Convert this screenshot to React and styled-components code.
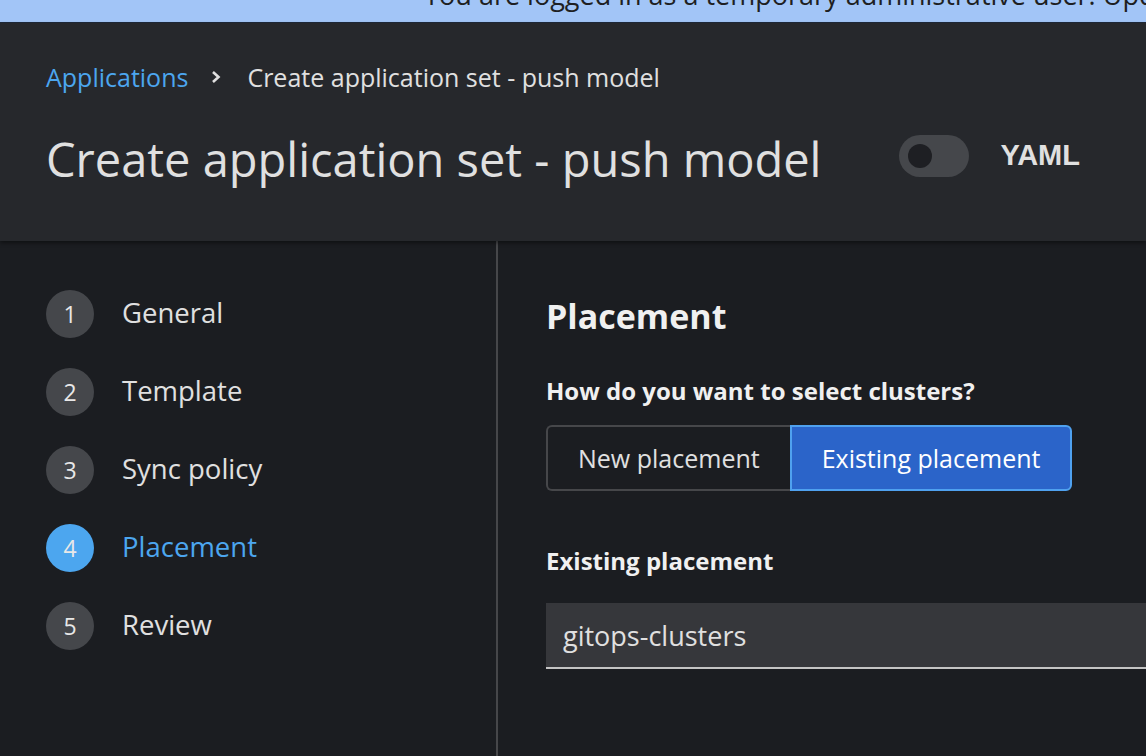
import React from "react";
import styled, { createGlobalStyle } from "styled-components";

const Global = createGlobalStyle`
  html, body { margin: 0; padding: 0; background: #1b1d21; }
  body { font-family: "Open Sans", "Noto Sans", sans-serif; overflow: hidden; }
  * { box-sizing: border-box; }
`;

const Page = styled.div`
  width: 1146px;
  height: 756px;
  display: flex;
  flex-direction: column;
  background: #1b1d21;
  overflow: hidden;
`;

const Banner = styled.div`
  height: 23px;
  flex: none;
  background: #a2c5f7;
  border-bottom: 1px solid #1f2a3a;
  display: flex;
  align-items: flex-end;
  padding-left: 424px;
  overflow: hidden;
  white-space: nowrap;
`;

const BannerText = styled.span`
  font-size: 27px;
  line-height: 27px;
  color: #1e1f22;
  margin-bottom: 14px;
`;

const Header = styled.header`
  flex: none;
  height: 218px;
  background: #26282c;
  padding: 39px 0 0 46px;
  display: flex;
  flex-direction: column;
  box-shadow: 0 2px 4px rgba(0, 0, 0, 0.45);
  position: relative;
  z-index: 1;
`;

const Breadcrumb = styled.nav`
  display: flex;
  align-items: center;
  font-size: 25px;
  line-height: 30px;
  height: 30px;
`;

const CrumbLink = styled.span`
  color: #4ca6ef;
`;

const CrumbCurrent = styled.span`
  color: #e0e0e0;
`;

const Chevron = styled.svg`
  width: 12px;
  height: 14px;
  margin: 0 25px 0 22px;
`;

const TitleRow = styled.div`
  display: flex;
  align-items: center;
  margin-top: 39px;
`;

const Title = styled.h1`
  margin: 0;
  font-size: 47px;
  line-height: 56px;
  font-weight: 500;
  color: #e0e0e0;
`;

const YamlToggle = styled.label`
  display: flex;
  align-items: center;
  margin-left: 78px;
  margin-bottom: 7px;
`;

const Switch = styled.span`
  width: 70px;
  height: 42px;
  border-radius: 21px;
  background: #45474b;
  display: flex;
  align-items: center;
  padding-left: 9px;
`;

const Knob = styled.span`
  width: 24px;
  height: 24px;
  border-radius: 50%;
  background: #1e1f23;
`;

const SwitchLabel = styled.span`
  margin-left: 31px;
  font-size: 29px;
  font-weight: 700;
  color: #e0e0e0;
  font-family: "Liberation Sans", Arial, sans-serif;
`;

const Body = styled.div`
  flex: 1;
  display: flex;
`;

const Nav = styled.ol`
  width: 498px;
  flex: none;
  margin: 0;
  padding: 49px 0 0 46px;
  list-style: none;
  border-right: 2px solid #46474a;
  display: flex;
  flex-direction: column;
  gap: 30px;
`;

const Step = styled.li`
  display: flex;
  align-items: center;
  height: 48px;
`;

const StepNum = styled.span`
  width: 48px;
  height: 48px;
  border-radius: 50%;
  background: ${(p) => (p.$active ? "#4ca6ef" : "#45474b")};
  color: #e8e8e8;
  font-size: 23px;
  display: flex;
  align-items: center;
  justify-content: center;
`;

const StepLabel = styled.span`
  margin-left: 28px;
  font-size: 27.5px;
  line-height: 36px;
  margin-top: -3px;
  color: ${(p) => (p.$active ? "#4ca6ef" : "#e0e0e0")};
`;

const Content = styled.main`
  flex: 1;
  padding: 55px 0 0 48px;
  display: flex;
  flex-direction: column;
`;

const SectionTitle = styled.h2`
  margin: 0;
  font-size: 34px;
  line-height: 40px;
  font-weight: 700;
  color: #f0f0f0;
`;

const FieldLabel = styled.div`
  font-size: 24px;
  line-height: 30px;
  font-weight: 700;
  color: #f0f0f0;
  margin-top: ${(p) => p.$mt}px;
`;

const ToggleGroup = styled.div`
  display: flex;
  margin-top: 19px;
`;

const ToggleButton = styled.button`
  height: 66px;
  padding: 0 ${(p) => p.$px}px;
  font-family: inherit;
  font-size: 25px;
  color: ${(p) => (p.$on ? "#ffffff" : "#e0e0e0")};
  background: ${(p) => (p.$on ? "#2b64c9" : "#1b1d21")};
  border: 2px solid ${(p) => (p.$on ? "#4fa1ef" : "#46474a")};
  border-radius: ${(p) => (p.$first ? "6px 0 0 6px" : "0 6px 6px 0")};
  ${(p) => (p.$first ? "border-right: none;" : "")}
`;

const Input = styled.div`
  margin-top: 27px;
  height: 66px;
  background: #36373b;
  border-bottom: 2px solid #c4c4c4;
  display: flex;
  align-items: center;
  padding-left: 17px;
  font-size: 27px;
  color: #e0e0e0;
`;

const steps = ["General", "Template", "Sync policy", "Placement", "Review"];

export default function App() {
  return (
    <Page>
      <Global />
      <Banner>
        <BannerText>You are logged in as a temporary administrative user. Update the cluster OAuth configuration</BannerText>
      </Banner>
      <Header>
        <Breadcrumb>
          <CrumbLink>Applications</CrumbLink>
          <Chevron viewBox="0 0 12 14">
            <path d="M3 2 L8.5 7 L3 12" fill="none" stroke="#e0e0e0" strokeWidth="2.6" />
          </Chevron>
          <CrumbCurrent>Create application set - push model</CrumbCurrent>
        </Breadcrumb>
        <TitleRow>
          <Title>Create application set - push model</Title>
          <YamlToggle>
            <Switch>
              <Knob />
            </Switch>
            <SwitchLabel>YAML</SwitchLabel>
          </YamlToggle>
        </TitleRow>
      </Header>
      <Body>
        <Nav>
          {steps.map((s, i) => (
            <Step key={s}>
              <StepNum $active={i === 3}>{i + 1}</StepNum>
              <StepLabel $active={i === 3}>{s}</StepLabel>
            </Step>
          ))}
        </Nav>
        <Content>
          <SectionTitle>Placement</SectionTitle>
          <FieldLabel $mt={40}>How do you want to select clusters?</FieldLabel>
          <ToggleGroup>
            <ToggleButton $first $px={30}>New placement</ToggleButton>
            <ToggleButton $on $px={30}>Existing placement</ToggleButton>
          </ToggleGroup>
          <FieldLabel $mt={55}>Existing placement</FieldLabel>
          <Input>gitops-clusters</Input>
        </Content>
      </Body>
    </Page>
  );
}
